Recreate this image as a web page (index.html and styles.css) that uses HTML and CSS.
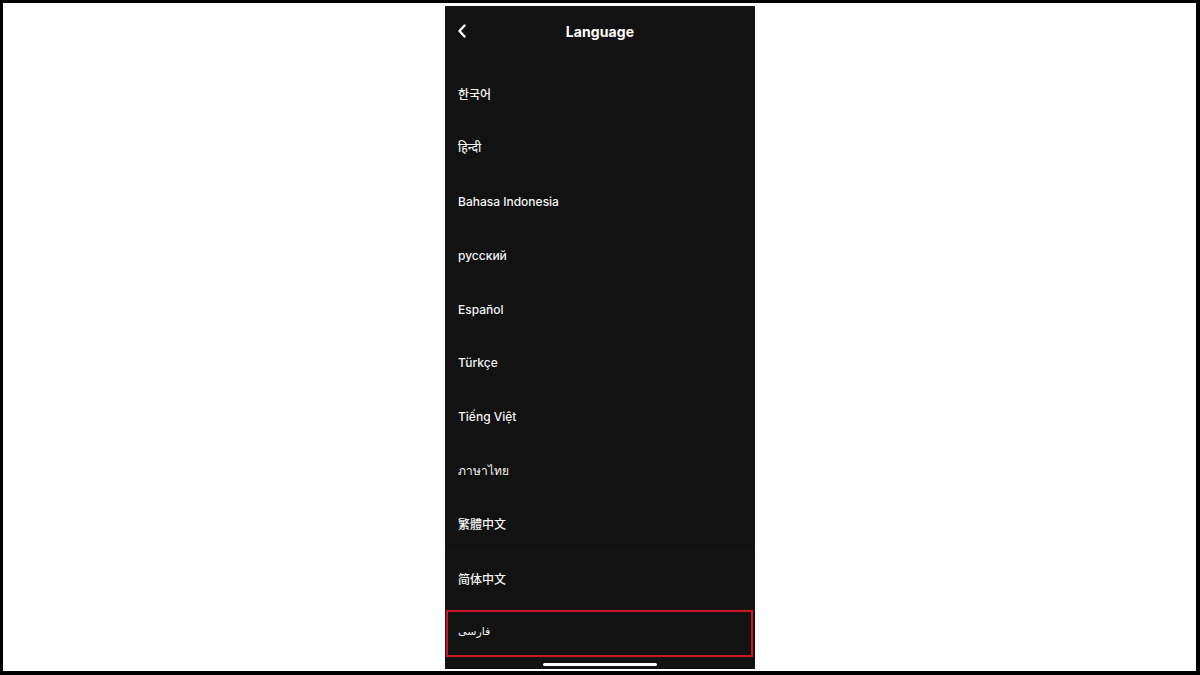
FILE: index.html
```html
<!DOCTYPE html>
<html lang="en">
<head>
<meta charset="utf-8">
<title>Language</title>
<link rel="stylesheet" href="styles.css">
</head>
<body>
<div class="frame">
  <div class="phone">
    <header class="header">
      <span class="back">
        <svg width="10" height="14" viewBox="0 0 10 14"><path d="M7.5 1.5 L2.5 7 L7.5 12.5" fill="none" stroke="#ffffff" stroke-width="2.4" stroke-linecap="round" stroke-linejoin="round"/></svg>
      </span>
      <h1 class="title">Language</h1>
    </header>
    <ul class="list">
      <li class="item kr" lang="ko">한국어</li>
      <li class="item" lang="hi">हिन्दी</li>
      <li class="item">Bahasa Indonesia</li>
      <li class="item" lang="ru">русский</li>
      <li class="item">Español</li>
      <li class="item">Türkçe</li>
      <li class="item">Tiếng Việt</li>
      <li class="item" lang="th">ภาษาไทย</li>
      <li class="item tc sep" lang="zh-Hant">繁體中文</li>
      <li class="item sc" lang="zh-Hans">简体中文</li>
      <li class="item fa highlight" lang="fa">فارسی</li>
    </ul>
    <div class="home-indicator"></div>
  </div>
</div>
</body>
</html>
```

FILE: styles.css
```css
* { box-sizing: border-box; }
html, body { margin: 0; padding: 0; }
body {
  width: 1200px;
  height: 675px;
  background: #ffffff;
  font-family: "Inter", "Noto Sans", "DejaVu Sans", sans-serif;
}
.frame {
  width: 1200px;
  height: 675px;
  border-style: solid;
  border-color: #000000;
  border-width: 3px 4px 4px 3px;
  display: flex;
  justify-content: center;
  align-items: flex-start;
  padding-top: 3px;
}
.phone {
  width: 310px;
  height: 663px;
  background: #121212;
  display: flex;
  flex-direction: column;
  margin-left: 1px;
}
.header {
  height: 50px;
  flex: none;
  display: flex;
  align-items: center;
  justify-content: center;
  position: relative;
}
.back {
  position: absolute;
  left: 12px;
  top: 18px;
  width: 10px;
  height: 14px;
  display: flex;
}
.title {
  margin: 0;
  color: #ffffff;
  font-size: 14px;
  font-weight: 700;
  letter-spacing: 0.1px;
}
.list {
  list-style: none;
  margin: 11px 0 0 0;
  padding: 0;
  flex: none;
}
.item {
  height: 53.8px;
  display: flex;
  align-items: center;
  padding-left: 13px;
  color: #f2f2f2;
  font-size: 12px;
  font-weight: 500;
  position: relative;
}
.kr { font-family: "Inter", "Noto Sans CJK KR", sans-serif; }
.tc { font-family: "Inter", "Noto Sans CJK TC", sans-serif; }
.sc { font-family: "Inter", "Noto Sans CJK SC", sans-serif; }
.fa { font-family: "DejaVu Sans", sans-serif; font-weight: 400; font-size: 11px; }
.sep { border-bottom: 1px solid #181818; }
.highlight::after {
  content: "";
  position: absolute;
  left: 1px;
  right: 2px;
  top: 5px;
  bottom: 2px;
  border: 2px solid #c8182a;
  box-shadow: 0 0 1px rgba(200, 24, 42, 0.6);
}
.home-indicator {
  flex: none;
  width: 114px;
  height: 3px;
  border-radius: 2px;
  background: #ffffff;
  margin: 4px auto 0 auto;
}
```
